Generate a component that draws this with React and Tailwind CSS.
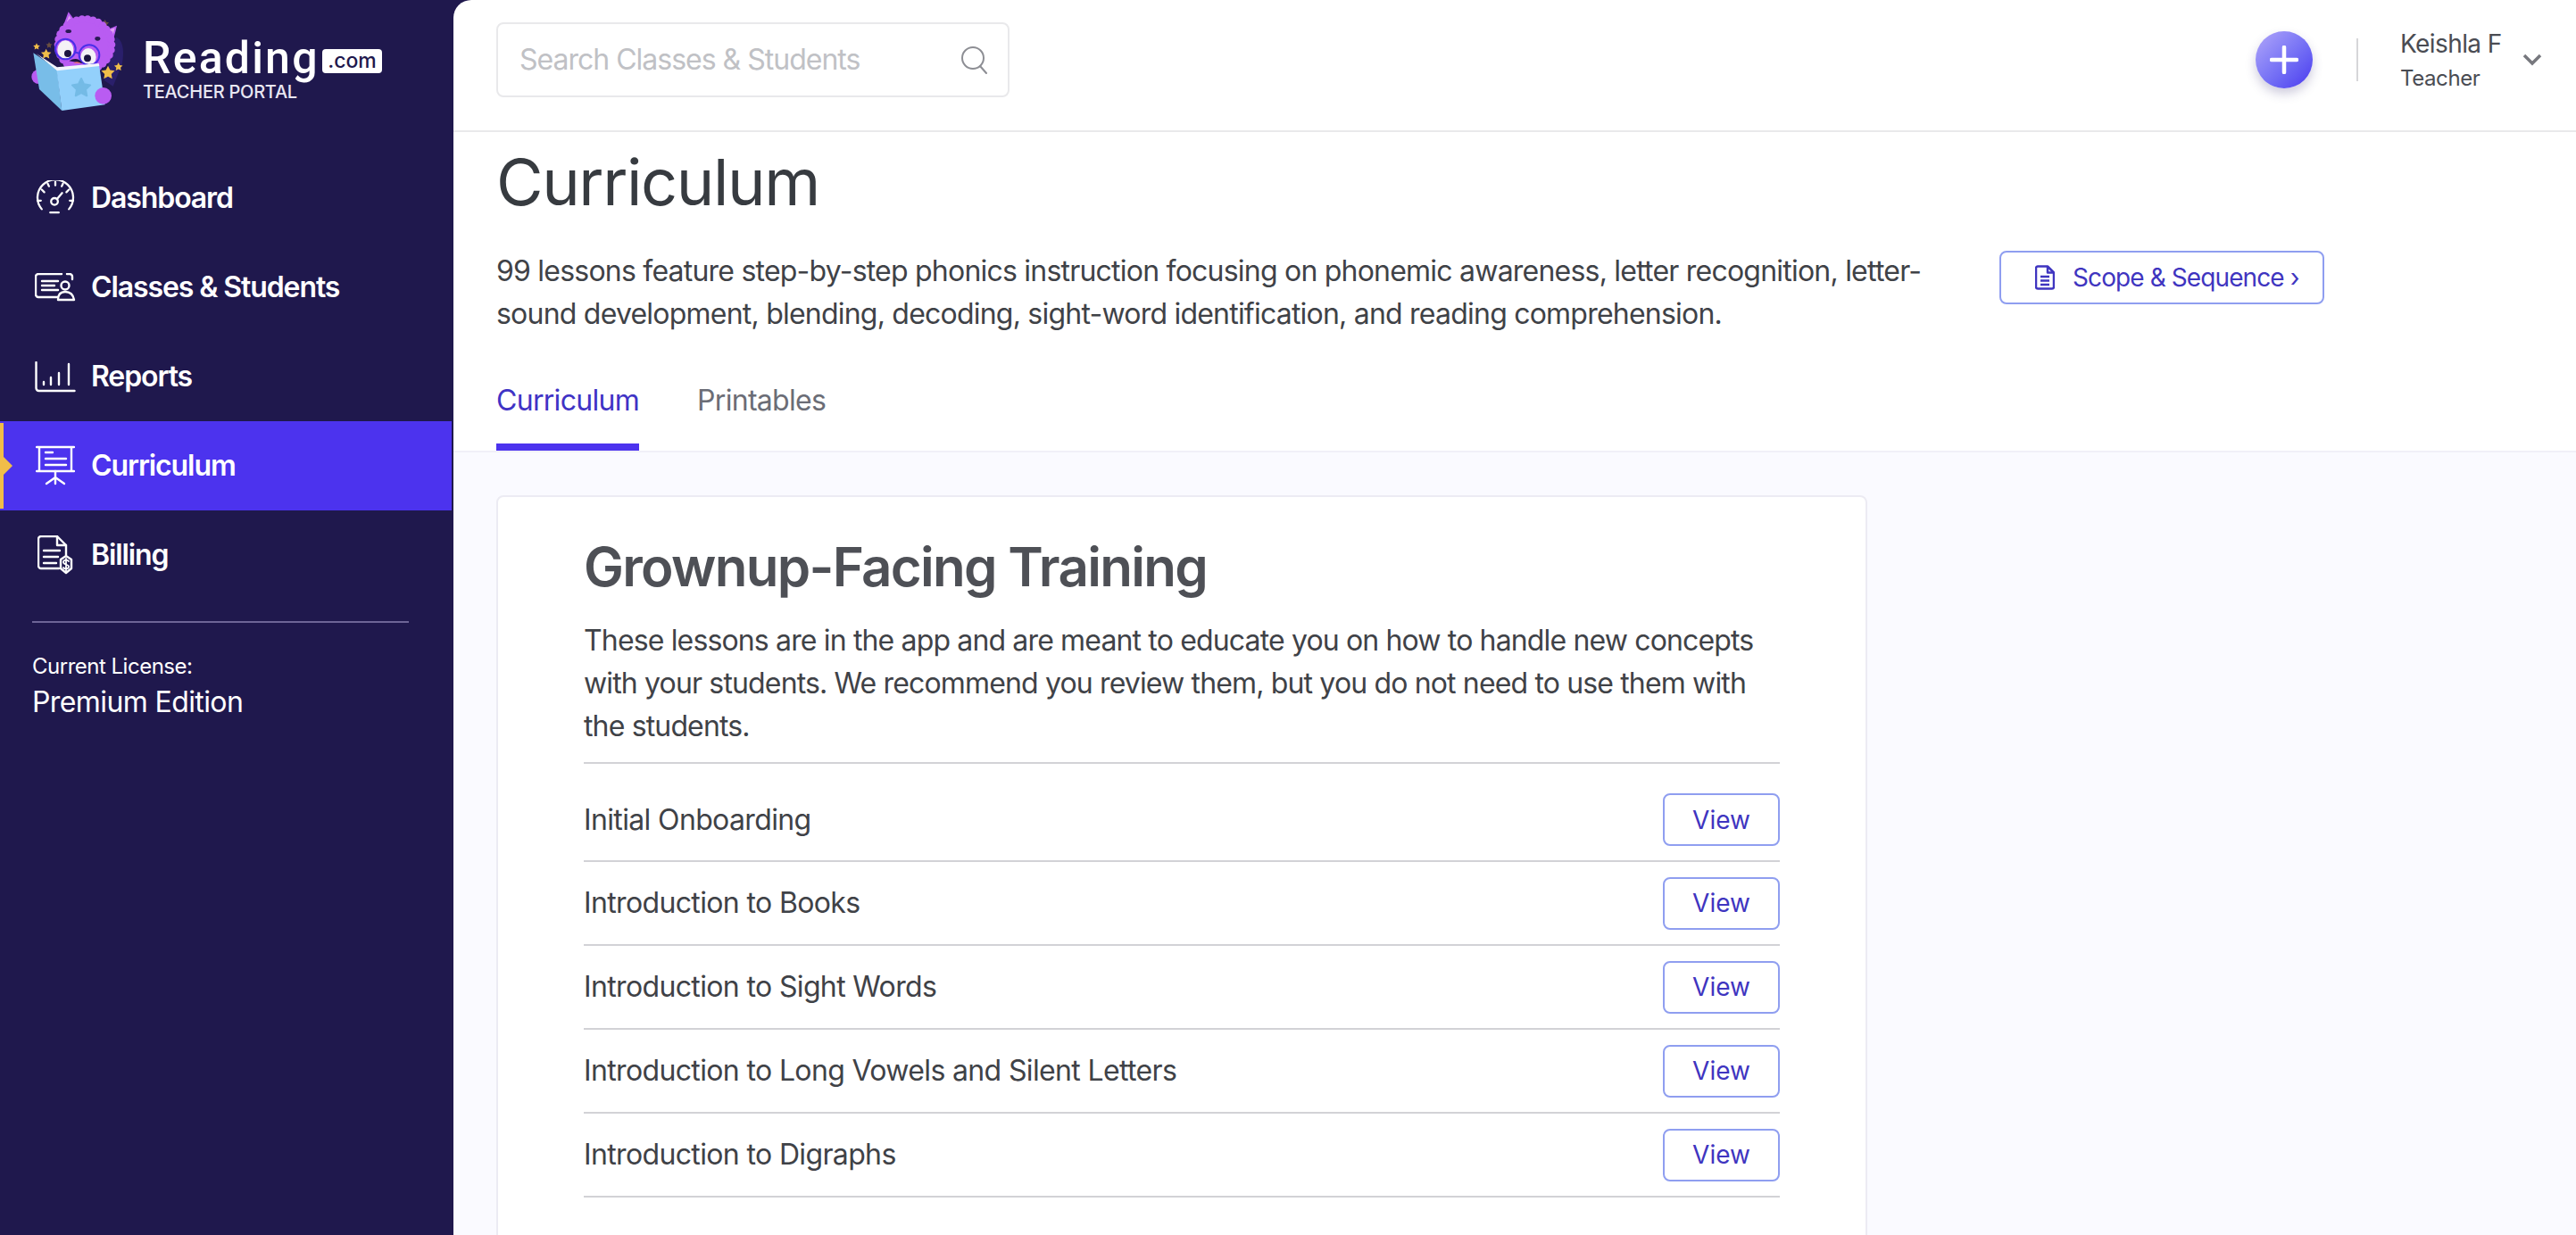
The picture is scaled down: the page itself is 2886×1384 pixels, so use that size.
import React from "react";

const NAV = [
  { label: "Dashboard", icon: "gauge" },
  { label: "Classes & Students", icon: "classes" },
  { label: "Reports", icon: "reports" },
  { label: "Curriculum", icon: "board", active: true },
  { label: "Billing", icon: "billing" },
];

const LESSONS = [
  "Initial Onboarding",
  "Introduction to Books",
  "Introduction to Sight Words",
  "Introduction to Long Vowels and Silent Letters",
  "Introduction to Digraphs",
];

const star = (cx, cy, r) => {
  const pts = [];
  for (let i = 0; i < 10; i++) {
    const a = -Math.PI / 2 + (i * Math.PI) / 5;
    const rr = i % 2 ? r * 0.5 : r;
    pts.push(`${cx + rr * Math.cos(a)},${cy + rr * Math.sin(a)}`);
  }
  return pts.join(" ");
};

const Mascot = () => {
  const bumps = Array.from({ length: 30 }, (_, i) => (i * Math.PI * 2) / 30);
  return (
    <svg width="130" height="135" viewBox="0 0 390 405" className="shrink-0">
      <path d="M330 125c25 10 28 50 20 90l-30 75-30-20z" fill="#2a1f6b" />
      <polygon points={star(293, 80, 14)} fill="#6b5040" />
      <polygon points={star(105, 152, 11)} fill="#6b5040" />
      <polygon points="155,80 170,40 192,70" fill="#b95cf2" />
      <polygon points="165,72 172,52 183,70" fill="#e3a0f5" />
      <polygon points="300,100 333,86 322,130" fill="#b95cf2" />
      <polygon points="307,100 326,94 320,116" fill="#e3a0f5" />
      <ellipse cx="225" cy="150" rx="92" ry="88" fill="#b95cf2" />
      {bumps.map((a, i) => (
        <circle key={i} cx={225 + 90 * Math.cos(a)} cy={150 + 86 * Math.sin(a)} r="13" fill="#b95cf2" />
      ))}
      <ellipse cx="170" cy="105" rx="10" ry="6" fill="#2a1a55" />
      <ellipse cx="268" cy="130" rx="9" ry="7" fill="#2a1a55" />
      <ellipse cx="160" cy="168" rx="27" ry="32" fill="#f4f1f6" />
      <ellipse cx="237" cy="192" rx="26" ry="30" fill="#f4f1f6" />
      <circle cx="168" cy="180" r="12" fill="#1c1440" />
      <circle cx="234" cy="196" r="12" fill="#1c1440" />
      <circle cx="160" cy="165" r="34" fill="none" stroke="#4a2fe8" strokeWidth="6" />
      <circle cx="240" cy="185" r="34" fill="none" stroke="#4a2fe8" strokeWidth="6" />
      <path d="M190 175l18 5" stroke="#4a2fe8" strokeWidth="6" />
      <path d="M172 205q28-18 46 8z" fill="#1c1440" />
      <path d="M186 212q14-10 26 2z" fill="#ef6f7a" />
      <polygon points={star(63, 157, 12)} fill="#f0bd49" />
      <polygon points={star(95, 182, 18)} fill="#f0bd49" />
      <polygon points={star(338, 225, 15)} fill="#f0bd49" />
      <polygon points={star(303, 245, 24)} fill="#f0bd49" />
      <circle cx="70" cy="258" r="24" fill="#b95cf2" />
      <polygon points="52,178 132,232 148,372 72,300" fill="#78bde8" />
      <polygon points="130,232 273,218 293,352 148,372" fill="#93d0fb" />
      <polygon points="62,180 132,226 272,213 274,222 132,238" fill="#f2f6fb" />
      <polygon points={star(213, 296, 32)} fill="#74bbe6" stroke="#74bbe6" strokeWidth="6" strokeLinejoin="round" />
      <circle cx="287" cy="322" r="28" fill="#b95cf2" />
    </svg>
  );
};

const NavIcon = ({ name }) => {
  const common = { fill: "none", stroke: "#fff", strokeWidth: 2.4, strokeLinecap: "round", strokeLinejoin: "round" };
  if (name === "gauge") {
    return (
      <svg width="46" height="40" viewBox="0 0 48 42" {...common}>
        <path d="M8 34a21 21 0 1 1 32 0" />
        <path d="M3 24h4M41 24h4M8 11l3 3M40 11l-3 3M24 2v4M15 4l1.500 3M33 4l-1.500 3" />
        <circle cx="23" cy="25" r="4" />
        <path d="M26 22l6-7M18 38h10" />
      </svg>
    );
  }
  if (name === "classes") {
    return (
      <svg width="46" height="32" viewBox="0 0 46 32" {...common}>
        <path d="M30 1H4a3 3 0 0 0-3 3v20a3 3 0 0 0 3 3h22M36 1h3a3 3 0 0 1 3 3v3" />
        <path d="M8 9h18M8 14h14M8 19h18" />
        <circle cx="34" cy="14" r="4.500" />
        <path d="M26 30c0-6 3-9 8-9s9 3 10 9z" />
      </svg>
    );
  }
  if (name === "reports") {
    return (
      <svg width="46" height="35" viewBox="0 0 46 35" {...common}>
        <path d="M1.500 1v29a3 3 0 0 0 3 3h40" />
        <path d="M10 23v3M18 18v8M27 13v13M38 3v23" />
      </svg>
    );
  }
  if (name === "board") {
    return (
      <svg width="44" height="46" viewBox="0 0 44 46" {...common}>
        <path d="M1 2h42M1 29h42M4 2v27M40 2v27" />
        <path d="M11 8h8M11 15h23M11 22h23" />
        <path d="M22 29v14M22 36l-10 7M22 36l10 7" />
      </svg>
    );
  }
  return (
    <svg width="40" height="44" viewBox="0 0 40 44" {...common}>
      <path d="M24 37H4a3 3 0 0 1-3-3V4a3 3 0 0 1 3-3h18l10 10v11" />
      <path d="M22 1v10h10M7 17h18M7 24h16M7 31h14" />
      <path d="M32 23l6 4v10l-6 5-6-5V27z" />
      <path d="M35 29c-1-2-6-2-6 1s6 2 6 5-5 3-6 1M32 26v14" strokeWidth="1.800" />
    </svg>
  );
};

const NavItem = ({ item }) => (
  <div
    className={`relative h-[100px] w-[506px] flex items-center text-[32px] font-semibold tracking-[-1.1px] text-white ${
      item.active ? "bg-[#4c33ee]" : ""
    }`}
  >
    {item.active && (
      <div className="absolute left-0 top-[2px] bottom-[2px] w-[4px] bg-[#f0bd49]">
        <div className="absolute left-[4px] top-[38px] w-0 h-0 border-y-[10px] border-y-transparent border-l-[10px] border-l-[#f0bd49]" />
      </div>
    )}
    <div className="w-[102px] shrink-0 pl-[39px]">
      <div className="w-[46px] flex justify-center">
        <NavIcon name={item.icon} />
      </div>
    </div>
    {item.label}
  </div>
);

const ViewButton = () => (
  <button className="w-[131px] h-[59px] rounded-[8px] border-2 border-[#8f9ef0] bg-white text-[28px] text-[#3f35c0]">
    View
  </button>
);

export default function App() {
  return (
    <div className="flex h-screen overflow-hidden bg-[#1f184d] font-[Inter,sans-serif]">
      <aside className="w-[508px] shrink-0 text-white">
        <div className="h-[172px] flex items-start pl-[20px]">
          <Mascot />
          <div className="ml-[10px] mt-[41px]">
            <div className="flex items-start">
              <span className="w-[197px] font-[Roboto,sans-serif] text-[50px] leading-[48px] font-medium tracking-[2.2px] text-white">Reading</span>
              <span className="ml-[4px] mt-[14px] h-[27px] w-[67px] rounded-[4px] bg-white text-center text-[23px] leading-[26px] font-medium text-[#1f184d]">
                .com
              </span>
            </div>
            <div className="mt-[2px] text-[20px] leading-[24px] font-medium tracking-[-0.25px] text-[#e9e7f2]">TEACHER PORTAL</div>
          </div>
        </div>
        <nav>
          {NAV.map((item) => (
            <NavItem key={item.label} item={item} />
          ))}
        </nav>
        <div className="mx-[36px] mt-[24px] h-[2px] w-[422px] bg-[#6d6596]" />
        <div className="ml-[36px] mt-[34px] text-[24px] leading-[30px] tracking-[-0.5px]">Current License:</div>
        <div className="ml-[36px] mt-[5px] text-[32px] leading-[40px] tracking-[-0.6px]">Premium Edition</div>
      </aside>

      <main className="flex-1 min-w-0 bg-white rounded-tl-[20px] overflow-hidden flex flex-col">
        <header className="h-[148px] shrink-0 border-b-2 border-[#e9e9eb] flex items-center pl-[48px] pb-[12px]">
          <div className="w-[575px] h-[84px] rounded-[8px] border-2 border-[#e9e9eb] flex items-center justify-between pl-[24px] pr-[22px] text-[32px] tracking-[-1px] text-[#c0c1c5]">
            <span>Search Classes &amp; Students</span>
            <svg width="32" height="32" viewBox="0 0 32 32" fill="none" stroke="#8d8e94" strokeWidth="2" strokeLinecap="round">
              <circle cx="15" cy="14" r="12" />
              <path d="M23 23l7 8" />
            </svg>
          </div>
          <div className="ml-auto flex items-center">
            <div className="w-[64px] h-[64px] rounded-full bg-gradient-to-br from-[#b3a6f9] to-[#4c33ee] shadow-[0_6px_12px_rgba(60,50,120,0.25)] flex items-center justify-center">
              <svg width="32" height="32" viewBox="0 0 32 32" stroke="#fff" strokeWidth="4.500" strokeLinecap="round">
                <path d="M16 2v28M2 16h28" />
              </svg>
            </div>
            <div className="ml-[49px] w-[2px] h-[48px] bg-[#d6d6d9]" />
            <div className="ml-[47px] w-[137px] text-[#4a4c53]">
              <div className="text-[28px] leading-[36px] tracking-[-0.6px]">Keishla F</div>
              <div className="mt-[6px] text-[24px] leading-[30px] tracking-[-0.4px]">Teacher</div>
            </div>
            <svg className="mr-[38px]" width="22" height="14" viewBox="0 0 22 14" fill="none" stroke="#77787e" strokeWidth="3.500">
              <path d="M2 2l9 9 9-9" />
            </svg>
          </div>
        </header>

        <div className="flex-1 min-h-0 overflow-hidden flex flex-col">
          <section className="shrink-0 pl-[48px] border-b-2 border-[#f1f0f8]">
            <h1 className="mt-[20px] text-[72px] leading-[72px] tracking-[-1.4px] text-[#373b40]">Curriculum</h1>
            <div className="mt-[40px] flex items-start">
              <p className="w-[1620px] text-[32px] leading-[48px] tracking-[-0.78px] text-[#3f4247]">
                99 lessons feature step-by-step phonics instruction focusing on phonemic awareness, letter recognition, letter-sound
                development, blending, decoding, sight-word identification, and reading comprehension.
              </p>
              <button className="ml-[64px] mt-[1px] w-[364px] h-[60px] rounded-[8px] border-2 border-[#8f9ef0] flex items-center pl-[38px] gap-[20px] text-[28px] tracking-[-0.9px] text-[#3f35c0]">
                <svg width="22" height="28" viewBox="0 0 22 28" fill="none" stroke="#3f35c0" strokeWidth="2.500" strokeLinejoin="round">
                  <path d="M14 1.500H3a2 2 0 0 0-2 2v21a2 2 0 0 0 2 2h16a2 2 0 0 0 2-2V8.500z" />
                  <path d="M14 1.500v7h7M6 13h10M6 17.500h10M6 22h10" />
                </svg>
                Scope &amp; Sequence ›
              </button>
            </div>
            <div className="mt-[41px] flex gap-[65px] text-[32px] tracking-[-0.7px]">
              <div className="h-[88px] border-b-[8px] border-[#4c33ee] text-[#4033c5] leading-[40px] pt-[12px]">Curriculum</div>
              <div className="h-[88px] text-[#6b6d76] leading-[40px] pt-[12px]">Printables</div>
            </div>
          </section>

          <section className="flex-1 bg-[#fafaff] pl-[48px] pt-[48px]">
            <div className="w-[1536px] min-h-[900px] rounded-t-[8px] border-2 border-[#ecebf3] bg-white pl-[96px] pr-[96px] pt-[42px]">
              <h2 className="text-[60px] leading-[72px] font-semibold tracking-[-1.7px] text-[#4e5056]">Grownup-Facing Training</h2>
              <p className="mt-[23px] text-[32px] leading-[48px] tracking-[-0.85px] text-[#3f4247]">
                These lessons are in the app and are meant to educate you on how to handle new concepts with your students. We recommend
                you review them, but you do not need to use them with the students.
              </p>
              <div className="mt-[16px] border-t-2 border-[#d2d2d6]">
                {LESSONS.map((title, i) => (
                  <div
                    key={title}
                    className={`flex items-center justify-between border-b-2 border-[#d2d2d6] ${i === 0 ? "h-[110px] pt-[17px]" : "h-[94px]"}`}
                  >
                    <span className="text-[32px] tracking-[-0.64px] text-[#3f4247]">{title}</span>
                    <ViewButton />
                  </div>
                ))}
              </div>
            </div>
          </section>
        </div>
      </main>
    </div>
  );
}
